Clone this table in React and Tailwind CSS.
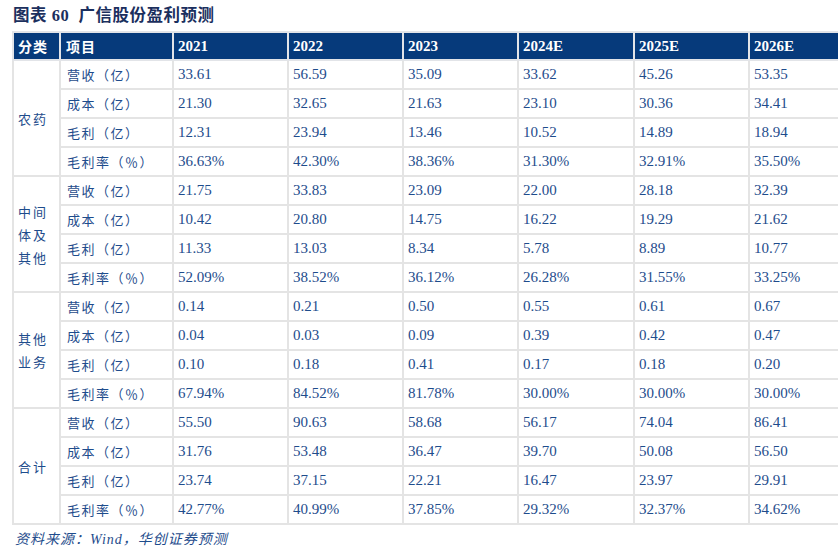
import React from "react";

const years = ["2021", "2022", "2023", "2024E", "2025E", "2026E"];
const labels = ["营收（亿）", "成本（亿）", "毛利（亿）", "毛利率（％）"];
const groups = [
  {
    name: ["农药"],
    rows: [
      ["33.61", "56.59", "35.09", "33.62", "45.26", "53.35"],
      ["21.30", "32.65", "21.63", "23.10", "30.36", "34.41"],
      ["12.31", "23.94", "13.46", "10.52", "14.89", "18.94"],
      ["36.63%", "42.30%", "38.36%", "31.30%", "32.91%", "35.50%"],
    ],
  },
  {
    name: ["中间", "体及", "其他"],
    rows: [
      ["21.75", "33.83", "23.09", "22.00", "28.18", "32.39"],
      ["10.42", "20.80", "14.75", "16.22", "19.29", "21.62"],
      ["11.33", "13.03", "8.34", "5.78", "8.89", "10.77"],
      ["52.09%", "38.52%", "36.12%", "26.28%", "31.55%", "33.25%"],
    ],
  },
  {
    name: ["其他", "业务"],
    rows: [
      ["0.14", "0.21", "0.50", "0.55", "0.61", "0.67"],
      ["0.04", "0.03", "0.09", "0.39", "0.42", "0.47"],
      ["0.10", "0.18", "0.41", "0.17", "0.18", "0.20"],
      ["67.94%", "84.52%", "81.78%", "30.00%", "30.00%", "30.00%"],
    ],
  },
  {
    name: ["合计"],
    rows: [
      ["55.50", "90.63", "58.68", "56.17", "74.04", "86.41"],
      ["31.76", "53.48", "36.47", "39.70", "50.08", "56.50"],
      ["23.74", "37.15", "22.21", "16.47", "23.97", "29.91"],
      ["42.77%", "40.99%", "37.85%", "29.32%", "32.37%", "34.62%"],
    ],
  },
];

const serif = "font-['Liberation_Serif','Noto_Sans_CJK_SC',serif]";

export default function App() {
  return (
    <div className={`w-[838px] h-[556px] overflow-hidden bg-white ${serif}`}>
      <div className="h-[31px] flex items-center pl-[13px] pt-[1px] text-[#1b2f5e] font-bold text-[16.5px] tracking-[0.5px]">
        图表 60&nbsp;&nbsp;广信股份盈利预测
      </div>
      <table className="ml-[12px] table-fixed border-collapse w-[852px]">
        <colgroup>
          <col className="w-[47px]" />
          <col className="w-[113px]" />
          <col className="w-[115px]" />
          <col className="w-[115px]" />
          <col className="w-[115px]" />
          <col className="w-[116px]" />
          <col className="w-[115px]" />
          <col className="w-[116px]" />
        </colgroup>
        <thead>
          <tr className="h-[28px] bg-[#063a7b] text-white">
            <th className="border-2 border-[#e2e4e8] text-left pl-[4px] font-bold text-[14px] tracking-[1px] font-['Noto_Sans_CJK_SC',sans-serif] p-0">
              分类
            </th>
            <th className="border-2 border-[#e2e4e8] text-left pl-[5px] font-bold text-[14px] tracking-[1px] font-['Noto_Sans_CJK_SC',sans-serif] p-0">
              项目
            </th>
            {years.map((y) => (
              <th
                key={y}
                className="border-2 border-[#e2e4e8] text-left pl-[4px] font-bold text-[15px] p-0"
              >
                {y}
              </th>
            ))}
          </tr>
        </thead>
        <tbody className="text-[#1e4c8c]">
          {groups.map((g) =>
            g.rows.map((r, i) => (
              <tr key={g.name.join("") + i} className="h-[29px]">
                {i === 0 && (
                  <td
                    rowSpan={4}
                    className="border-2 border-[#e4e4e4] align-middle pl-[4px] p-0 text-[13px] tracking-[2px] leading-[23px] font-['Noto_Sans_CJK_SC',sans-serif]"
                  >
                    {g.name.map((n) => (
                      <div key={n}>{n}</div>
                    ))}
                  </td>
                )}
                <td className="border-2 border-[#e4e4e4] pl-[6px] p-0 text-[13px] tracking-[1.5px] font-['Noto_Sans_CJK_SC',sans-serif]">
                  {labels[i]}
                </td>
                {r.map((v, j) => (
                  <td
                    key={j}
                    className="border-2 border-[#e4e4e4] pl-[4px] p-0 text-[15px]"
                  >
                    {v}
                  </td>
                ))}
              </tr>
            ))
          )}
        </tbody>
      </table>
      <div className="pl-[15px] pt-[4px] italic text-[14px] text-[#1e4c8c] tracking-[1px]">
        资料来源：Wind，华创证券预测
      </div>
    </div>
  );
}
